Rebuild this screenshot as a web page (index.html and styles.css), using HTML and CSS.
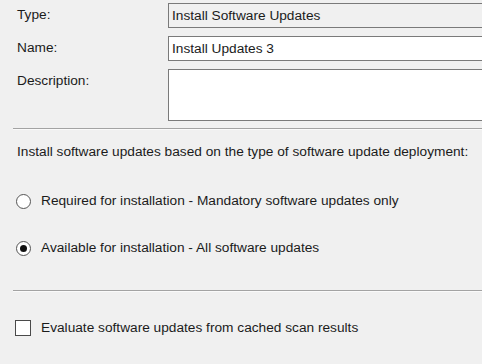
FILE: index.html
```html
<!DOCTYPE html>
<html lang="en">
<head>
  <meta charset="UTF-8">
  <title>Install Software Updates</title>
  <link rel="stylesheet" href="styles.css">
</head>
<body>
  <main class="page">
    <div class="fields">
      <div class="row">
        <label class="label" for="type">Type:</label>
        <input class="box box-readonly" type="text" id="type" value="Install Software Updates" readonly>
      </div>
      <div class="row">
        <label class="label" for="name">Name:</label>
        <input class="box" type="text" id="name" value="Install Updates 3">
      </div>
      <div class="row">
        <label class="label" for="desc">Description:</label>
        <textarea class="box box-tall" id="desc"></textarea>
      </div>
    </div>

    <hr class="rule">

    <p class="intro">Install software updates based on the type of software update deployment:</p>

    <label class="option option-first">
      <input class="radio" type="radio" name="mode" value="required">
      <span>Required for installation - Mandatory software updates only</span>
    </label>
    <label class="option option-second">
      <input class="radio" type="radio" name="mode" value="available" checked>
      <span>Available for installation - All software updates</span>
    </label>

    <hr class="rule rule-lower">

    <label class="option option-check">
      <input class="check" type="checkbox" name="cached">
      <span>Evaluate software updates from cached scan results</span>
    </label>
  </main>
</body>
</html>
```

FILE: styles.css
```css
html, body {
  margin: 0;
  padding: 0;
  background: #f0f0f0;
  overflow: hidden;
}
body {
  font-family: "Liberation Sans", Arial, sans-serif;
  font-size: 13.7px;
  line-height: 16px;
  color: #1b1b1b;
}
.page {
  width: 482px;
  height: 364px;
  box-sizing: border-box;
  padding: 3px 0 0 13px;
}
.row {
  display: flex;
  align-items: flex-start;
  margin-bottom: 8px;
}
.row:last-child { margin-bottom: 0; }
.label {
  width: 155px;
  flex-shrink: 0;
  box-sizing: border-box;
  padding: 4px 0 0 4px;
}
.box {
  width: 330px;
  height: 25px;
  flex-shrink: 0;
  box-sizing: border-box;
  margin: 0;
  padding: 0 3px;
  border: 1px solid #7a7a7a;
  border-radius: 0;
  background: #fff;
  font: inherit;
  color: inherit;
  outline: none;
}
.box-readonly { background: #f0f0f0; }
.box-tall {
  height: 52px;
  resize: none;
  padding-top: 2px;
}
.rule {
  margin: 7px 0 0;
  height: 0;
  border: 0;
  border-top: 1px solid #a3a3a3;
  border-bottom: 1px solid #fafafa;
}
.intro {
  margin: 14px 0 0 4px;
}
.option {
  display: flex;
  align-items: center;
  height: 16px;
}
.option-first { margin-top: 33px; }
.option-second { margin-top: 31px; }
.rule-lower { margin-top: 34px; }
.option-check { margin-top: 28px; }
.radio, .check {
  appearance: none;
  -webkit-appearance: none;
  margin: 0 10px 0 3px;
  flex-shrink: 0;
  box-sizing: border-box;
  background: #fff;
  display: grid;
  place-items: center;
}
.radio {
  width: 15px;
  height: 15px;
  border: 1px solid #555;
  border-radius: 50%;
}
.radio:checked::after {
  content: "";
  width: 7px;
  height: 7px;
  border-radius: 50%;
  background: #111;
}
.check {
  width: 16px;
  height: 16px;
  margin-left: 2px;
  border: 1px solid #4a4a4a;
}
```
